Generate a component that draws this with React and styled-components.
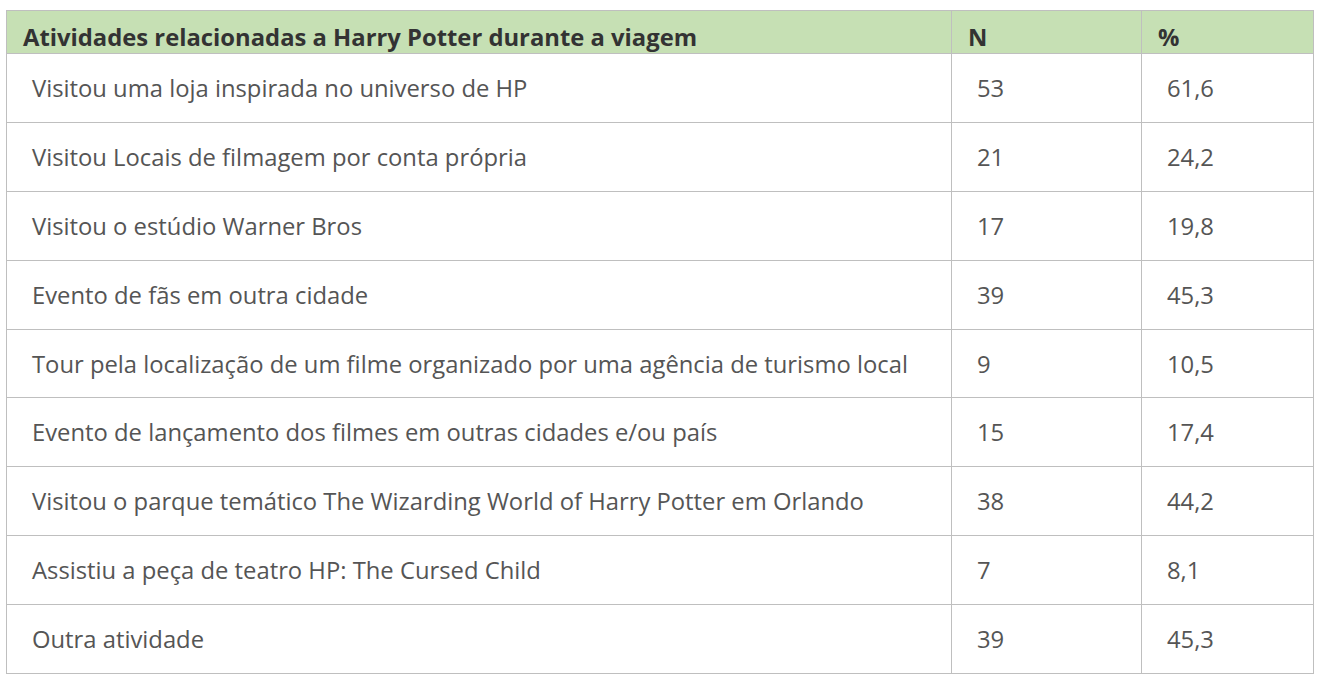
import React from "react";
import styled, { createGlobalStyle } from "styled-components";

const Global = createGlobalStyle`
  html, body { margin: 0; padding: 0; background: #fff; }
  body { font-family: "Open Sans", "Noto Sans", sans-serif; }
`;

const Page = styled.div`
  padding: 10px 6px 0 6px;
`;

const Table = styled.table`
  width: 1307px;
  border-collapse: collapse;
  table-layout: fixed;
`;

const HeadRow = styled.tr`
  height: 43px;
  background: #c6e0b4;
`;

const Row = styled.tr`
  height: 68.9px;
`;

const HeadCell = styled.th`
  width: ${(p) => p.$w}px;
  box-sizing: border-box;
  border: 1px solid #bfbfbf;
  padding: 0 0 1px 16px;
  text-align: left;
  font-size: 23.8px;
  line-height: 30px;
  font-weight: 700;
  color: #333;
  vertical-align: bottom;
`;

const Cell = styled.td`
  border: 1px solid #bfbfbf;
  padding: 0 0 0 25px;
  font-size: 23.8px;
  color: #555;
  vertical-align: middle;
`;

const rows = [
  ["Visitou uma loja inspirada no universo de HP", "53", "61,6"],
  ["Visitou Locais de filmagem por conta própria", "21", "24,2"],
  ["Visitou o estúdio Warner Bros", "17", "19,8"],
  ["Evento de fãs em outra cidade", "39", "45,3"],
  ["Tour pela localização de um filme organizado por uma agência de turismo local", "9", "10,5"],
  ["Evento de lançamento dos filmes em outras cidades e/ou país", "15", "17,4"],
  ["Visitou o parque temático The Wizarding World of Harry Potter em Orlando", "38", "44,2"],
  ["Assistiu a peça de teatro HP: The Cursed Child", "7", "8,1"],
  ["Outra atividade", "39", "45,3"],
];

export default function App() {
  return (
    <>
      <Global />
      <Page>
        <Table>
          <thead>
            <HeadRow>
              <HeadCell $w={945}>Atividades relacionadas a Harry Potter durante a viagem</HeadCell>
              <HeadCell $w={190}>N</HeadCell>
              <HeadCell $w={172}>%</HeadCell>
            </HeadRow>
          </thead>
          <tbody>
            {rows.map((r, i) => (
              <Row key={i}>
                <Cell>{r[0]}</Cell>
                <Cell>{r[1]}</Cell>
                <Cell>{r[2]}</Cell>
              </Row>
            ))}
          </tbody>
        </Table>
      </Page>
    </>
  );
}
